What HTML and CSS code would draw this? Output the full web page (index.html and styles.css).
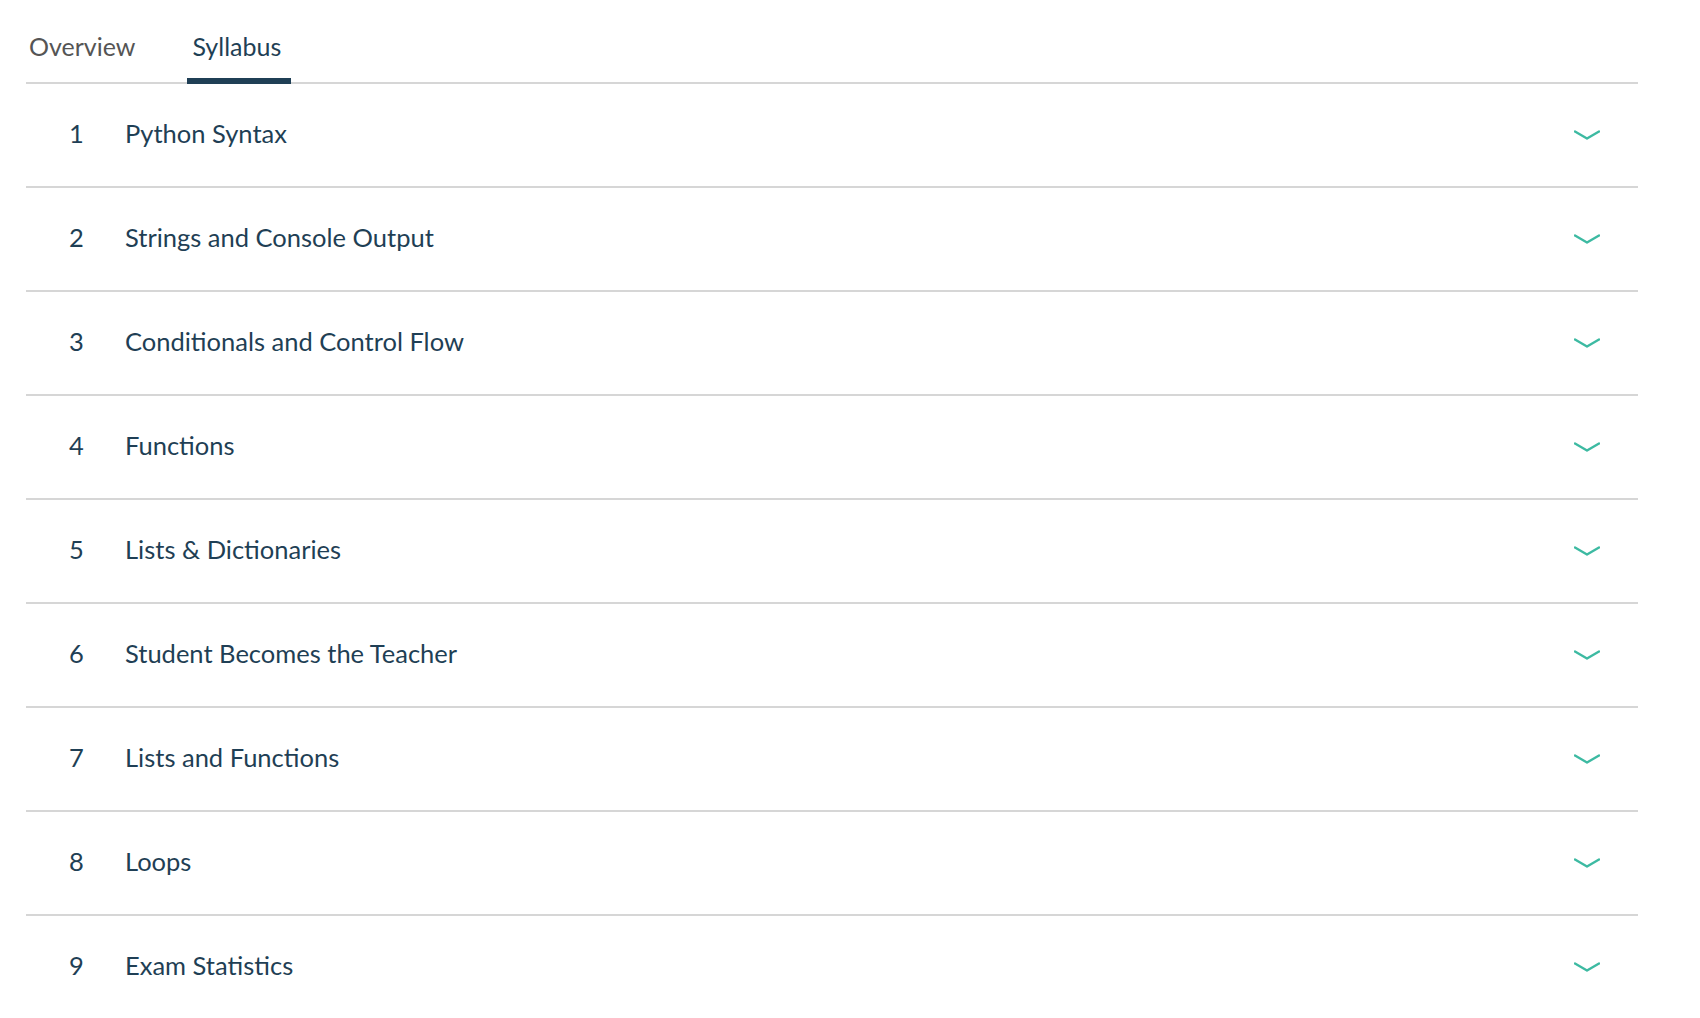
FILE: index.html
```html
<!DOCTYPE html>
<html lang="en">
<head>
<meta charset="utf-8">
<title>Syllabus</title>
<link rel="stylesheet" href="styles.css">
</head>
<body>
<div class="page">
  <nav class="tabs">
    <a class="tab">Overview</a>
    <a class="tab tab-active">Syllabus</a>
  </nav>
  <ul class="syllabus">
    <li class="row"><span class="num">1</span><span class="title">Python Syntax</span><svg class="chev" viewBox="0 0 26 10"><path d="M1 1.5 L13 8.5 L25 1.5"/></svg></li>
    <li class="row"><span class="num">2</span><span class="title">Strings and Console Output</span><svg class="chev" viewBox="0 0 26 10"><path d="M1 1.5 L13 8.5 L25 1.5"/></svg></li>
    <li class="row"><span class="num">3</span><span class="title">Conditionals and Control Flow</span><svg class="chev" viewBox="0 0 26 10"><path d="M1 1.5 L13 8.5 L25 1.5"/></svg></li>
    <li class="row"><span class="num">4</span><span class="title">Functions</span><svg class="chev" viewBox="0 0 26 10"><path d="M1 1.5 L13 8.5 L25 1.5"/></svg></li>
    <li class="row"><span class="num">5</span><span class="title">Lists &amp; Dictionaries</span><svg class="chev" viewBox="0 0 26 10"><path d="M1 1.5 L13 8.5 L25 1.5"/></svg></li>
    <li class="row"><span class="num">6</span><span class="title">Student Becomes the Teacher</span><svg class="chev" viewBox="0 0 26 10"><path d="M1 1.5 L13 8.5 L25 1.5"/></svg></li>
    <li class="row"><span class="num">7</span><span class="title">Lists and Functions</span><svg class="chev" viewBox="0 0 26 10"><path d="M1 1.5 L13 8.5 L25 1.5"/></svg></li>
    <li class="row"><span class="num">8</span><span class="title">Loops</span><svg class="chev" viewBox="0 0 26 10"><path d="M1 1.5 L13 8.5 L25 1.5"/></svg></li>
    <li class="row"><span class="num">9</span><span class="title">Exam Statistics</span><svg class="chev" viewBox="0 0 26 10"><path d="M1 1.5 L13 8.5 L25 1.5"/></svg></li>
  </ul>
</div>
</body>
</html>
```

FILE: styles.css
```css
html, body {
  margin: 0;
  padding: 0;
  background: #ffffff;
}
body {
  font-family: "Lato", "Open Sans", sans-serif;
  color: #1f3f55;
  overflow: hidden;
}
.page {
  width: 1612px;
  margin-left: 26px;
}
.tabs {
  display: flex;
  height: 84px;
  box-sizing: border-box;
  border-bottom: 2px solid #d6d6d6;
  align-items: flex-end;
}
.tab {
  display: block;
  font-size: 25px;
  line-height: 32px;
  padding: 0 0 16px 3px;
  margin-bottom: -2px;
  border-bottom: 6px solid transparent;
  color: #555555;
  cursor: pointer;
}
.tab + .tab {
  margin-left: 52px;
  padding-left: 5px;
  padding-right: 10px;
}
.tab-active {
  color: #1f3f55;
  border-bottom-color: #1f3f55;
}
.syllabus {
  list-style: none;
  margin: 0;
  padding: 0;
}
.row {
  display: flex;
  align-items: center;
  height: 99px;
  padding-bottom: 3px;
  border-bottom: 2px solid #d6d6d6;
  font-size: 25.5px;
  line-height: 1.2;
}
.num {
  width: 56px;
  padding-left: 43px;
  box-sizing: content-box;
}
.title {
  flex: 1;
}
.chev {
  width: 26px;
  height: 10px;
  margin-right: 38px;
  margin-top: 3px;
  fill: none;
  stroke: #3dbaa2;
  stroke-width: 2.4;
  stroke-linecap: round;
  stroke-linejoin: round;
}
```
